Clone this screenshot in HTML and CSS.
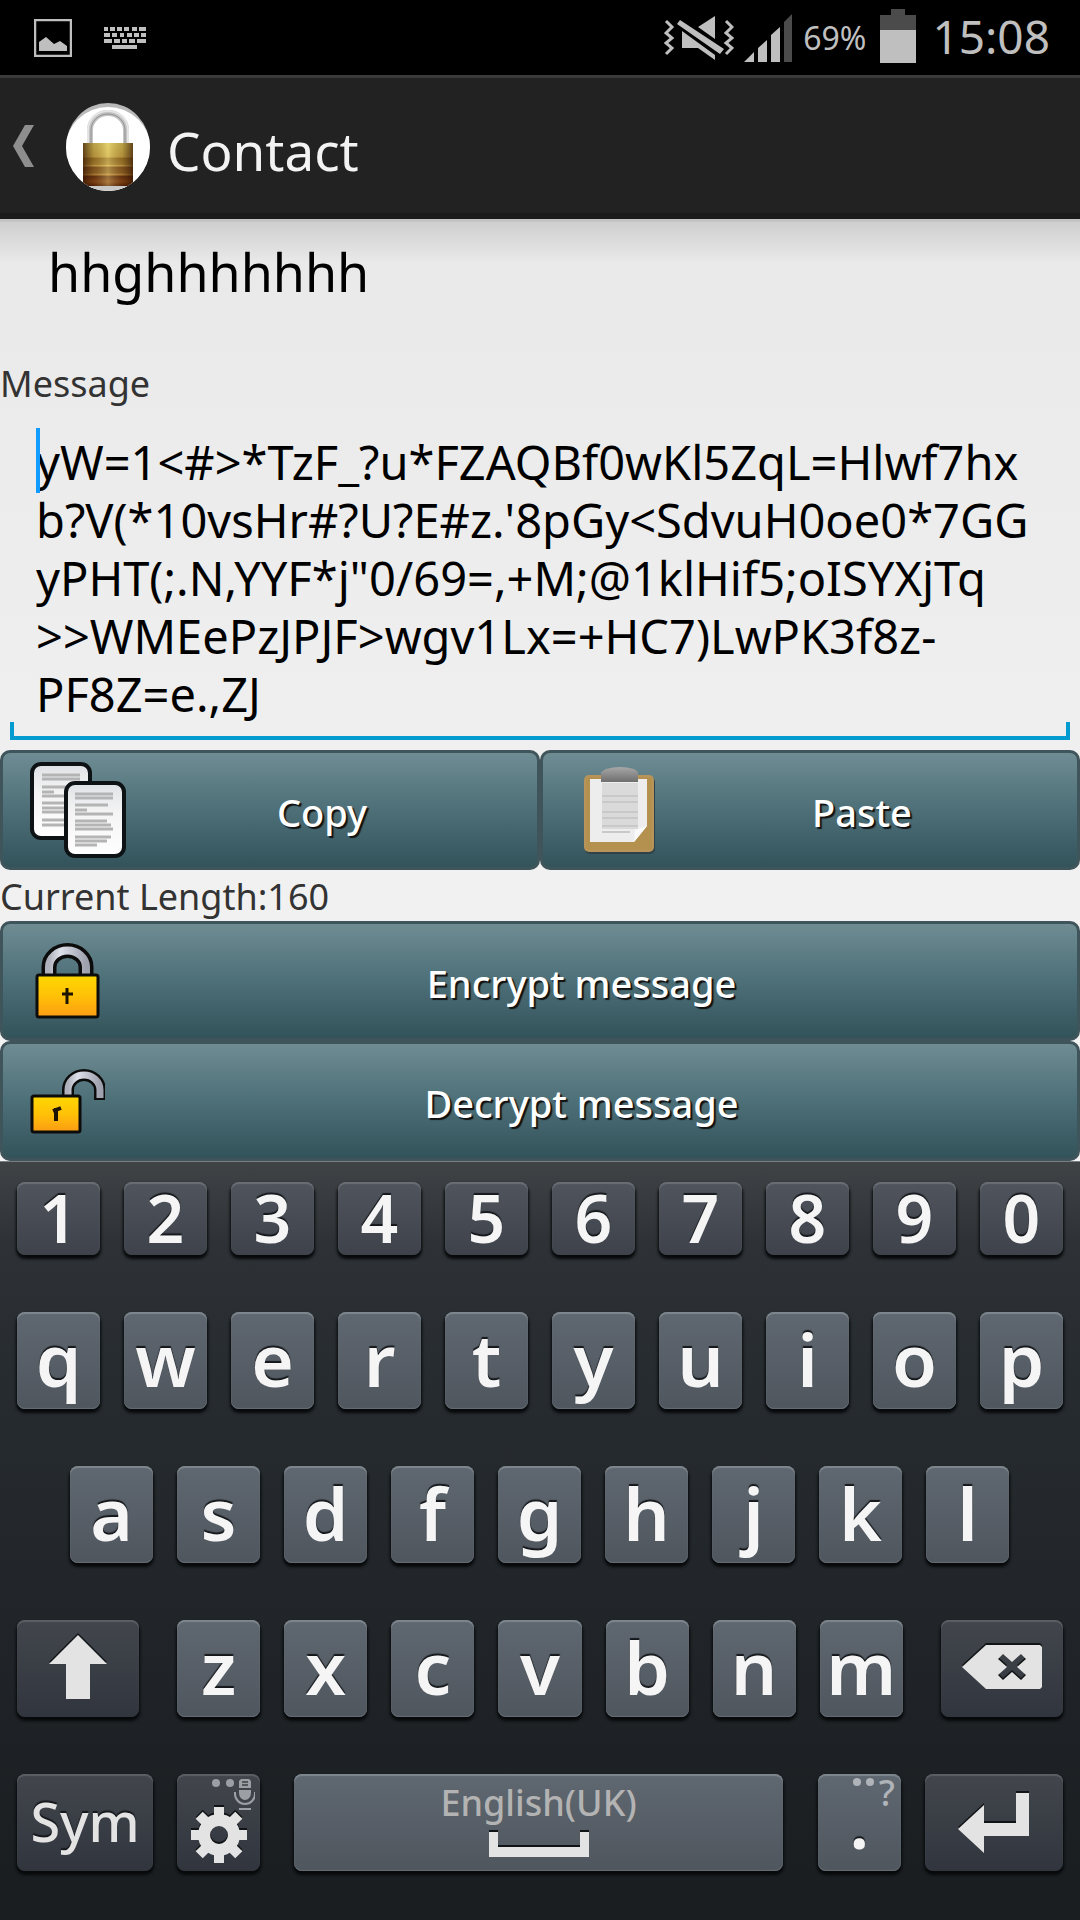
FILE: index.html
```html
<!DOCTYPE html>
<html lang="en">
<head>
<meta charset="utf-8">
<meta name="viewport" content="width=device-width, initial-scale=1">
<title>Contact</title>
<link rel="stylesheet" href="styles.css">
</head>
<body>
<header>
  <div class="status-bar">
    <div class="status-group status-left">
      <svg width="38" height="38" viewBox="0 0 38 38" aria-hidden="true"><rect x="1" y="1" width="36" height="36" fill="none" stroke="#bfbfbf" stroke-width="2.500"/><path d="M5 23l7-5 8 7 6-3 7 5v5H5z" fill="#bfbfbf"/></svg>
      <svg width="42" height="22" viewBox="0 0 42 22" fill="#bfbfbf" aria-hidden="true"><path d="M0 0h4v4H0zM6 0h5v4H6zM13 0h5v4h-5zM20 0h5v4h-5zM28 0h5v4h-5zM35 0h7v4h-7zM0 6h6v4H0zM8 6h5v4H8zM16 6h4v4h-4zM23 6h5v4h-5zM30 6h5v4h-5zM37 6h5v4h-5zM0 12h8v4H0zM10 12h6v4h-6zM18 12h5v4h-5zM25 12h6v4h-6zM33 12h9v4h-9zM8 18h25v4H8z"/></svg>
    </div>
    <div class="status-group">
      <svg width="70" height="46" viewBox="0 0 70 46" aria-hidden="true"><path d="M2 6l6 6-6 6 6 5-6 5 6 5-6 6M62 6l6 6-6 6 6 5-6 5 6 5-6 6" fill="none" stroke="#bfbfbf" stroke-width="3"/><path d="M34 12L51 1v23zM18 16v17h16l17 12v-5zM13 9l3-4 44 29-4 5z" fill="#bfbfbf"/></svg>
      <svg class="signal" width="49" height="48" viewBox="0 0 49 48" fill="#bfbfbf" aria-hidden="true"><path d="M0 48l10-10v10zM14 48V34l9-8v22zM27 48V21l9-8v35z"/><path d="M40 48V8l8-8v48z" fill="#4b4b4b"/></svg>
      <span class="battery-text">69%</span>
      <svg class="battery" width="36" height="54" viewBox="0 0 36 54" aria-hidden="true"><path d="M11 0h14v6h11v16H0V6h11z" fill="#4b4b4b"/><path d="M0 21h36v33H0z" fill="#bfbfbf"/></svg>
      <span class="clock">15:08</span>
    </div>
  </div>
  <div class="action-bar">
    <button class="back" type="button" aria-label="Back"><svg width="22" height="42" viewBox="0 0 22 42"><path d="M12 0h9L9 21l12 21h-9L0 21z" fill="#8e8e8e"/></svg></button>
    <svg class="app-icon" width="84" height="90" viewBox="0 0 84 90" aria-hidden="true">
      <defs>
        <linearGradient id="brass" x1="0" y1="0" x2="0" y2="1"><stop offset="0" stop-color="#d9c45a"/><stop offset=".32" stop-color="#cfae4a"/><stop offset=".36" stop-color="#a07a2a"/><stop offset=".5" stop-color="#b08a35"/><stop offset=".53" stop-color="#dcb95a"/><stop offset=".56" stop-color="#8c5c20"/><stop offset=".7" stop-color="#94682a"/><stop offset=".73" stop-color="#c58f3c"/><stop offset=".78" stop-color="#6b3512"/><stop offset=".9" stop-color="#8a4a18"/><stop offset="1" stop-color="#5c2408"/></linearGradient>
        <linearGradient id="brass-edge"><stop offset="0" stop-color="#2a0d00" stop-opacity=".7"/><stop offset=".22" stop-color="#3a1800" stop-opacity=".2"/><stop offset=".5" stop-color="#fff6a0" stop-opacity=".3"/><stop offset=".78" stop-color="#3a1800" stop-opacity=".2"/><stop offset="1" stop-color="#2a0d00" stop-opacity=".7"/></linearGradient>
        <clipPath id="disc"><ellipse cx="42" cy="44" rx="42" ry="44"/></clipPath>
      </defs>
      <g clip-path="url(#disc)">
        <rect width="84" height="90" fill="#b9b9b9"/>
        <ellipse cx="42" cy="47" rx="43" ry="43" fill="#fff"/>
        <rect x="10" y="83" width="64" height="7" fill="#c9c9c9"/>
        <path d="M24 42V27a18 17 0 0 1 36 0v15" fill="none" stroke="#c4c4c4" stroke-width="6"/>
        <path d="M25 42V27a17 16 0 0 1 34 0v15" fill="none" stroke="#8f8f8f" stroke-width="1"/>
        <path d="M22 42V27a20 19 0 0 1 40 0v15" fill="none" stroke="#e4e4e4" stroke-width="2"/>
        <rect x="17" y="40" width="50" height="43" fill="url(#brass)"/>
        <rect x="17" y="40" width="50" height="43" fill="url(#brass-edge)"/>
      </g>
    </svg>
    <span class="screen-title">Contact</span>
  </div>
</header>

<main class="content">
  <h1 class="contact-name">hhghhhhhhh</h1>
  <label class="caption" for="message">Message</label>
  <div class="field">
    <textarea id="message" class="message" rows="5" spellcheck="false">yW=1&lt;#&gt;*TzF_?u*FZAQBf0wKl5ZqL=Hlwf7hx
b?V(*10vsHr#?U?E#z.'8pGy&lt;SdvuH0oe0*7GG
yPHT(;.N,YYF*j"0/69=,+M;@1klHif5;oISYXjTq
&gt;&gt;WMEePzJPJF&gt;wgv1Lx=+HC7)LwPK3f8z-
PF8Z=e.,ZJ</textarea>
    <span class="caret"></span>
  </div>
  <div class="button-row">
    <button class="action" type="button">
      <svg width="96" height="96" viewBox="0 0 96 96" aria-hidden="true">
        <defs><linearGradient id="sheet" x1="0" y1="0" x2="0" y2="1"><stop offset="0" stop-color="#dfe2e5"/><stop offset=".4" stop-color="#f4f4f4"/><stop offset="1" stop-color="#fff"/></linearGradient></defs>
        <rect x="2" y="2" width="58" height="74" rx="9" fill="url(#sheet)" stroke="#0d1214" stroke-width="4"/>
        <path d="M12 13h38M12 17h38M12 25h26M12 30h12M12 34h30M12 41h28M12 46h24M12 50h26M12 58h22M12 63h24" stroke="#b4b4b4" stroke-width="3"/>
        <rect x="36" y="21" width="58" height="73" rx="9" fill="url(#sheet)" stroke="#0d1214" stroke-width="4"/>
        <path d="M45 32h38M45 36h38M45 43h33M45 48h12M45 52h38M45 59h32M45 63h36M45 67h38M45 75h36M45 79h32M45 83h22" stroke="#b4b4b4" stroke-width="3"/>
      </svg>
      <span class="action-label">Copy</span>
    </button>
    <button class="action" type="button">
      <svg width="96" height="96" viewBox="0 0 96 96" aria-hidden="true">
        <defs><linearGradient id="clip" x1="0" y1="0" x2="0" y2="1"><stop offset="0" stop-color="#a8a8a8"/><stop offset="1" stop-color="#6e6e6e"/></linearGradient></defs>
        <rect x="15" y="15" width="70" height="77" rx="5" fill="#2f4247"/>
        <rect x="14" y="13" width="70" height="77" rx="5" fill="#b8945a"/>
        <rect x="16" y="15" width="66" height="73" rx="3" fill="#b59150"/>
        <path d="M20 17h57v47L64 80H20z" fill="#ededed"/>
        <path d="M77 64L64 80l1-12z" fill="#fafafa"/>
        <path d="M32 21h36v46H32z" fill="#dadada"/>
        <path d="M32 34h36M32 40h36M32 50h36M32 56h36M32 64h36M32 70h28" stroke="#c9c9c9" stroke-width="2"/>
        <path d="M36 7q14-4 28 0l4 3v10H31V10z" fill="url(#clip)"/>
      </svg>
      <span class="action-label">Paste</span>
    </button>
  </div>
  <p class="caption length">Current Length:160</p>
  <button class="action" type="button">
    <svg width="75" height="76" viewBox="0 0 75 76" aria-hidden="true">
      <defs>
        <linearGradient id="gold" x1="0" y1="0" x2="0" y2="1"><stop offset="0" stop-color="#ffd800"/><stop offset=".5" stop-color="#ffc107"/><stop offset="1" stop-color="#fb9c14"/></linearGradient>
        <linearGradient id="steel"><stop offset="0" stop-color="#aeb1bb"/><stop offset=".3" stop-color="#dfe1ea"/><stop offset=".7" stop-color="#b9bcc8"/><stop offset="1" stop-color="#9fa2ae"/></linearGradient>
      </defs>
      <path d="M19 34V24a18 16 0 0 1 37 0v10" fill="none" stroke="#0c0c0c" stroke-width="15"/>
      <path d="M19 34V24a18 16 0 0 1 37 0v10" fill="none" stroke="url(#steel)" stroke-width="8"/>
      <rect x="7" y="32" width="61" height="42" rx="2" fill="url(#gold)" stroke="#0c0c0c" stroke-width="3"/>
      <path d="M37 45v16M32 51h11" stroke="#1c1400" stroke-width="3"/>
    </svg>
    <span class="action-label">Encrypt message</span>
  </button>
  <button class="action" type="button">
    <svg width="75" height="66" viewBox="0 0 75 66" aria-hidden="true">
      <path d="M38 30V22a16 15 0 0 1 32 0v10" fill="none" stroke="#0c0c0c" stroke-width="12"/>
      <path d="M38 30V22a16 15 0 0 1 32 0v8" fill="none" stroke="url(#steel)" stroke-width="7"/>
      <rect x="2" y="28" width="48" height="36" rx="2" fill="url(#gold)" stroke="#0c0c0c" stroke-width="3"/>
      <path d="M26 40v13M23 43l8-3" fill="none" stroke="#1c1400" stroke-width="4"/>
    </svg>
    <span class="action-label">Decrypt message</span>
  </button>
</main>

<section class="keyboard" aria-label="Keyboard">
  <div class="key-row numbers">
    <button type="button">1</button><button type="button">2</button><button type="button">3</button><button type="button">4</button><button type="button">5</button><button type="button">6</button><button type="button">7</button><button type="button">8</button><button type="button">9</button><button type="button">0</button>
  </div>
  <div class="key-row">
    <button type="button">q</button><button type="button">w</button><button type="button">e</button><button type="button">r</button><button type="button">t</button><button type="button">y</button><button type="button">u</button><button type="button">i</button><button type="button">o</button><button type="button">p</button>
  </div>
  <div class="key-row home">
    <button type="button">a</button><button type="button">s</button><button type="button">d</button><button type="button">f</button><button type="button">g</button><button type="button">h</button><button type="button">j</button><button type="button">k</button><button type="button">l</button>
  </div>
  <div class="key-row">
    <button class="dark shift" type="button" aria-label="Shift"><svg class="glyph" width="58" height="64" viewBox="0 0 58 64"><path d="M29 0l29 29H41v35H17V29H0z"/></svg></button>
    <button type="button">z</button><button type="button">x</button><button type="button">c</button><button type="button">v</button><button type="button">b</button><button type="button">n</button><button type="button">m</button>
    <button class="dark backspace" type="button" aria-label="Backspace"><svg class="glyph" width="80" height="44" viewBox="0 0 80 44"><path fill-rule="evenodd" d="M24 0h54l2 2v40l-2 2H24L0 22zM36 14l9 8-9 8 5 5 9-8 9 8 5-5-9-8 9-8-5-5-9 8-9-8z"/></svg></button>
  </div>
  <div class="key-row">
    <button class="dark sym" type="button">Sym</button>
    <button class="dark" type="button" aria-label="Settings"><svg class="hint" width="43" height="32" viewBox="0 0 43 32" fill="#9c9fa3"><circle cx="4" cy="5" r="4"/><circle cx="18" cy="5" r="4"/><path d="M29 1h8l2 2v7H27V3zM27 12h12v3a6 7 0 0 1-12 0z"/><path d="M30 4h6M30 7h6" stroke="#3d4147" stroke-width="1.500"/><path d="M23 14v2a10 10 0 0 0 20 0v-2M27 31h12" fill="none" stroke="#9c9fa3" stroke-width="2"/></svg><svg class="glyph gear" width="56" height="56" viewBox="-28 -28 56 56"><circle r="15" fill="none" stroke="#e3e3e3" stroke-width="12"/><path d="M-5-28h10v10H-5zM-5 18h10v10H-5zM-28-5h10V5h-10zM18-5h10V5H18z"/><path transform="rotate(45)" d="M-5-28h10v10H-5zM-5 18h10v10H-5zM-28-5h10V5h-10zM18-5h10V5H18z"/></svg></button>
    <button class="space" type="button"><span>English(UK)</span><svg class="glyph" width="100" height="25" viewBox="0 0 100 25"><path d="M0 0h9v15h82V0h9v25H0z"/></svg></button>
    <button type="button"><span class="hint hint-text"><svg width="22" height="8" viewBox="0 0 22 8" fill="#b0b4b8" aria-hidden="true"><circle cx="4" cy="4" r="4"/><circle cx="17" cy="4" r="4"/></svg>?</span>.</button>
    <button class="dark enter" type="button" aria-label="Enter"><svg class="glyph" width="71" height="60" viewBox="0 0 71 60"><path d="M58 0h13v43H26v17L0 36l26-24v18h32z"/></svg></button>
  </div>
</section>
</body>
</html>
```
FILE: styles.css
```css
* { box-sizing: border-box; }

body {
  margin: 0;
  min-height: 100vh;
  display: flex;
  flex-direction: column;
  background: #1a1e21;
  color: #000;
  font-family: "Noto Sans", "Open Sans", sans-serif;
}

button {
  margin: 0;
  padding: 0;
  border: 0;
  background: none;
  color: inherit;
  font: inherit;
}

svg { flex: none; display: block; }

/* Status bar */
.status-bar {
  height: 78px;
  padding: 0 30px 0 34px;
  display: flex;
  align-items: center;
  justify-content: space-between;
  background: #000;
  border-bottom: 3px solid #3a3a3a;
  color: #bfbfbf;
}
.status-group { display: flex; align-items: center; gap: 10px; }
.status-left { gap: 32px; }
.battery-text { font-size: 32px; }
.battery { margin: 0 6px 4px 4px; }
.clock { font-size: 46px; line-height: 60px; padding-bottom: 4px; }

/* Action bar */
.action-bar {
  height: 141px;
  padding-left: 13px;
  display: flex;
  align-items: center;
  background: #222;
  border-bottom: 6px solid #1b1b1b;
  color: #f3f3f3;
}
.app-icon { margin: 4px 17px 0 31px; }
.screen-title { font-size: 53px; line-height: 72px; padding-top: 10px; }

/* Message form */
.content {
  display: flex;
  flex-direction: column;
  background:
    linear-gradient(#c3c3c3 3px, #cfcfcf 3px, rgba(232, 232, 232, 0) 44px) top / 100% 44px no-repeat,
    linear-gradient(#e9e9e9, #f4f4f4);
}
.contact-name {
  margin: 0;
  padding: 20px 48px 55px;
  font-size: 52px;
  font-weight: 400;
  line-height: 66px;
}
.caption {
  margin: 0;
  font-size: 36px;
  line-height: 48px;
  color: #333;
}
.length { padding-top: 3px; }

.field {
  position: relative;
  margin: 0 10px 10px;
  padding: 25px 0 17px 26px;
}
.field::after {
  content: "";
  position: absolute;
  inset: auto 0 0;
  height: 14px;
  border: 4px solid #049bd0;
  border-top: 0;
  pointer-events: none;
}
.message {
  display: block;
  width: 100%;
  margin: 0;
  padding: 0;
  border: 0;
  outline: 0;
  background: none;
  color: #000;
  font: 47px/58px "Noto Sans", "Open Sans", sans-serif;
  white-space: pre;
  overflow: hidden;
  resize: none;
}
.caret {
  position: absolute;
  left: 26px;
  top: 20px;
  width: 4px;
  height: 65px;
  background: #109bff;
}

.button-row { display: flex; }
.button-row .action { flex: 1; }
.action {
  height: 120px;
  padding: 0 27px;
  display: flex;
  align-items: center;
  gap: 8px;
  border: 3px solid #3f555b;
  border-radius: 10px;
  background: linear-gradient(#6f8c93, #50727a 45%, #33535b);
  color: #fff;
  font-size: 38px;
  font-weight: 500;
  text-shadow: 2px 2px 1px #111;
}
.action-label { flex: 1; padding-top: 3px; text-align: center; }

/* Keyboard */
.keyboard {
  flex: 1;
  padding: 20px 17px 49px;
  display: flex;
  flex-direction: column;
  gap: 57px;
  border-top: 1px solid #7a7e80;
  background: linear-gradient(#404346, #2e3236 80px, #272c30 200px, #1a1e21 95%);
  color: #f5f5f5;
}
.key-row { display: flex; gap: 24px; }
.key-row button {
  position: relative;
  flex: 83 1 0;
  height: 97px;
  padding-bottom: 4px;
  display: flex;
  align-items: center;
  justify-content: center;
  border-radius: 8px;
  background: linear-gradient(#5f6770, #4f565e);
  box-shadow: inset 0 2px 1px #7f878e, inset 0 -1px 1px #656d74, 0 3px 3px 1px #07090a;
  font-size: 73px;
  font-weight: 600;
  line-height: 1;
  text-shadow: 0 -2px 1px #14171a;
}
.key-row.numbers button {
  height: 73px;
  padding-bottom: 4px;
  background: linear-gradient(#50555d, #3e434b);
  box-shadow: inset 0 2px 1px #6a6f76, 0 3px 3px 1px #07090a;
  font-size: 66px;
}
.key-row.home { padding: 0 54px 0 53px; }
.key-row .dark {
  background: linear-gradient(#42464c, #31353e);
  box-shadow: inset 0 2px 1px #5b6065, 0 3px 3px 1px #07090a;
  color: #e3e3e3;
}
.glyph { fill: #e3e3e3; filter: drop-shadow(0 -2px 0 #111416); }
.key-row .shift { flex-grow: 122; margin-right: 14px; }
.key-row .backspace { flex-grow: 122; margin-left: 14px; }
.key-row .sym {
  flex-grow: 136;
  padding: 0 0 4px;
  font-size: 54px;
  font-weight: 500;
}
.key-row .enter { flex-grow: 138; padding: 0; }
.key-row .space {
  flex-grow: 488;
  margin: 0 11px 0 10px;
  padding: 6px 0 14px;
  flex-direction: column;
  justify-content: space-between;
  font-size: 36px;
  font-weight: 500;
  line-height: 46px;
  text-shadow: none;
  color: #b3b3b3;
}
.gear { margin-top: 29px; }
.hint { position: absolute; top: 4px; right: 5px; }
.hint-text {
  right: 6px;
  display: flex;
  align-items: flex-start;
  gap: 4px;
  color: #b0b4b8;
  font-size: 36px;
  font-weight: 500;
  line-height: 30px;
  text-shadow: none;
}
```
